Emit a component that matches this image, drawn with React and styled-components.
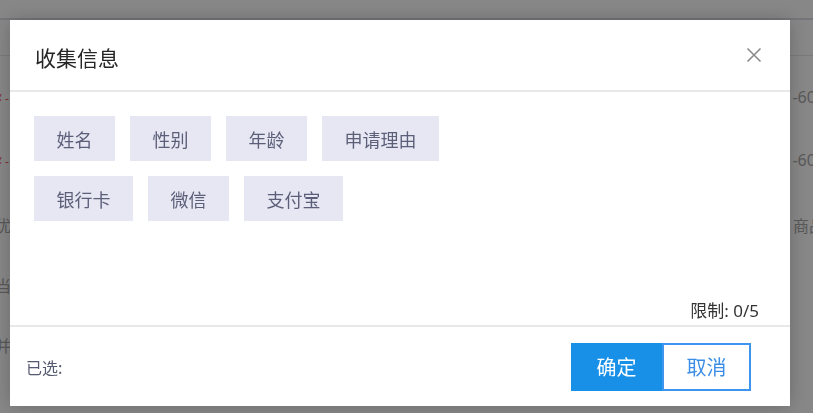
import React from 'react';
import styled, { createGlobalStyle } from 'styled-components';

const GlobalStyle = createGlobalStyle`
	html, body {
		margin: 0;
		padding: 0;
		background: #ffffff;
		font-family: "Noto Sans", "Noto Sans CJK SC", sans-serif;
		overflow: hidden;
	}
`;

const Page = styled.div`
	width: 813px;
	height: 413px;
	overflow: hidden;
`;

const PageTop = styled.div`
	height: 18px;
	border-bottom: 2px solid #dcdce6;
	background: #ffffff;
`;

const PageSection = styled.div`
	margin-top: 35px;
	border-top: 1px solid #e6e6ee;
`;

const PageRow = styled.div`
	display: flex;
	justify-content: space-between;
	align-items: center;
	height: ${props => props.h}px;
	font-size: 16px;
	color: #a8a8a8;
	margin-left: -5px;
	margin-right: -12px;
	white-space: nowrap;
`;

const Price = styled.span`
	color: #f26060;
	font-size: 12px;
`;

const Overlay = styled.div`
	position: fixed;
	inset: 0;
	background: rgba(0, 0, 0, 0.47);
`;

const ModalWrapper = styled.div`
	position: fixed;
	top: 20px;
	left: 10px;
	width: 780px;
	height: 386px;
	display: flex;
	flex-direction: column;
	background: #ffffff;
	box-shadow: 0 0 18px rgba(0, 0, 0, 0.22);
	font-family: "Noto Sans CJK SC", sans-serif;
`;

const ModalHeader = styled.div`
	display: flex;
	align-items: center;
	justify-content: space-between;
	height: 70px;
	padding: 0 28px 0 25px;
	border-bottom: 2px solid #e8e8e8;
`;

const ModalTitle = styled.div`
	font-size: 21px;
	color: #262626;
	line-height: 1;
	margin-top: 4px;
`;

const CloseButton = styled.button`
	display: flex;
	border: none;
	padding: 0;
	background: none;
	cursor: pointer;
`;

const ModalBody = styled.div`
	display: flex;
	flex-direction: column;
	height: 233px;
	padding: 24px 31px 3px 24px;
	box-sizing: border-box;
`;

const TagList = styled.div`
	display: flex;
	flex-direction: column;
	flex: 1;
`;

const TagRow = styled.div`
	display: flex;
	margin-bottom: 15px;
`;

const Tag = styled.div`
	height: 45px;
	padding: 0 22.5px;
	margin-right: 15px;
	display: flex;
	align-items: center;
	background: #e7e7f3;
	color: #5b5f78;
	font-size: 18px;
	cursor: pointer;
`;

const Limit = styled.div`
	align-self: flex-end;
	font-size: 17px;
	color: #333333;
	font-family: "Noto Sans", "Noto Sans CJK SC", sans-serif;
`;

const ModalFooter = styled.div`
	display: flex;
	align-items: center;
	justify-content: space-between;
	flex: 1;
	padding: 0 39px 0 16px;
	border-top: 2px solid #e8e8e8;
`;

const Selected = styled.div`
	font-size: 16px;
	color: #555a70;
`;

const ButtonGroup = styled.div`
	display: flex;
`;

const Button = styled.button`
	width: ${props => (props.primary ? '91px' : '89px')};
	height: 48px;
	box-sizing: border-box;
	font-family: "Noto Sans CJK SC", sans-serif;
	font-size: 20px;
	cursor: pointer;
	background: ${props => (props.primary ? '#1890e8' : '#ffffff')};
	color: ${props => (props.primary ? '#ffffff' : '#3a8ee6')};
	border: 2px solid ${props => (props.primary ? '#1890e8' : '#3d95ee')};
`;

const tagGroups = [
	['姓名', '性别', '年龄', '申请理由'],
	['银行卡', '微信', '支付宝']
];

const rows = [
	{ h: 82, left: <Price>¥ -</Price>, right: '-600' },
	{ h: 44, left: <Price>¥ -</Price>, right: '-600' },
	{ h: 86, left: '优惠', right: '商品' },
	{ h: 34, left: '当前', right: '' },
	{ h: 86, left: '并且', right: '' }
];

export default function App() {
	return (
		<Page>
			<GlobalStyle />
			<PageTop />
			<PageSection>
				{rows.map((row, i) => (
					<PageRow key={i} h={row.h}>
						<span>{row.left}</span>
						<span>{row.right}</span>
					</PageRow>
				))}
			</PageSection>
			<Overlay />
			<ModalWrapper>
				<ModalHeader>
					<ModalTitle>收集信息</ModalTitle>
					<CloseButton>
						<svg width="16" height="16" viewBox="0 0 16 16">
							<path d="M1.5 1.5 L14.5 14.5 M14.5 1.5 L1.5 14.5" stroke="#8a8a8a" strokeWidth="1.6" />
						</svg>
					</CloseButton>
				</ModalHeader>
				<ModalBody>
					<TagList>
						{tagGroups.map((group, i) => (
							<TagRow key={i}>
								{group.map(tag => (
									<Tag key={tag}>{tag}</Tag>
								))}
							</TagRow>
						))}
					</TagList>
					<Limit>限制: 0/5</Limit>
				</ModalBody>
				<ModalFooter>
					<Selected>已选:</Selected>
					<ButtonGroup>
						<Button primary>确定</Button>
						<Button>取消</Button>
					</ButtonGroup>
				</ModalFooter>
			</ModalWrapper>
		</Page>
	);
}
